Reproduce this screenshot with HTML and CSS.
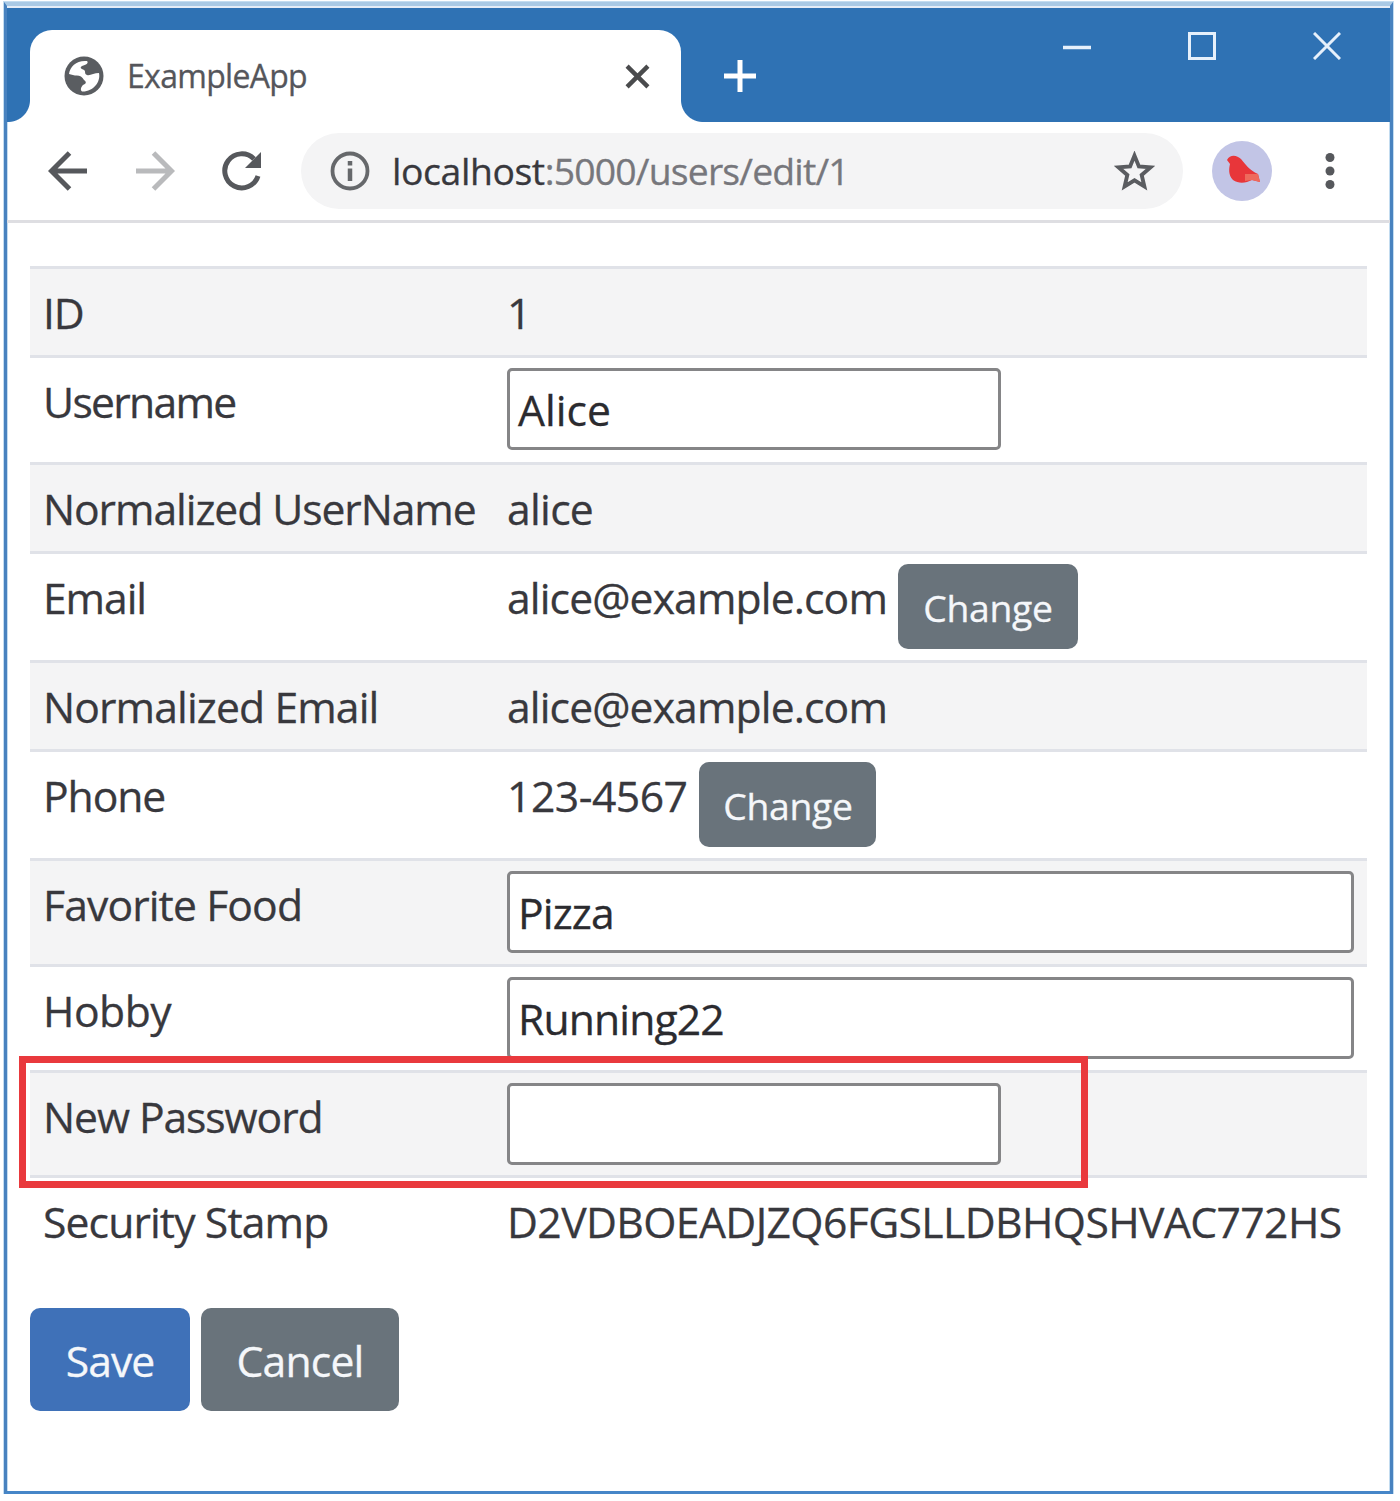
FILE: index.html
```html
<!DOCTYPE html>
<html lang="en">
<head>
<meta charset="utf-8">
<title>ExampleApp</title>
<link rel="stylesheet" href="styles.css">
</head>
<body>
<div class="window">
  <header class="titlebar">
    <div class="tab">
      <svg class="tab-icon" viewBox="0 0 40 40"><circle cx="20" cy="20" r="19.500" fill="#5a5d61"/><path d="M5 18C6 10 13 4 23 5C25 7 22 9 18 10C15 12 18 13 20 14C22 15 20 18 23 19C26 20 30 17 35 17C37 26 29 36 18 35.500C16 34 17 31 19 29C22 28 23 26 20 24C18 20 15 19 11 19.500Z" fill="#fff"/></svg>
      <span class="tab-title">ExampleApp</span>
      <svg class="tab-close" viewBox="0 0 24 24"><path d="M2 2L22 22M22 2L2 22" stroke="#4a4b4d" stroke-width="4.200"/></svg>
    </div>
    <svg class="new-tab" viewBox="0 0 34 34"><path d="M17 1V33M1 17H33" stroke="#fff" stroke-width="5"/></svg>
    <div class="controls">
      <svg viewBox="0 0 28 28"><path d="M0 15.500H28" stroke="#e6f0fb" stroke-width="3.500"/></svg>
      <svg viewBox="0 0 28 28"><rect x="1.500" y="1.500" width="25" height="25" fill="none" stroke="#e6f0fb" stroke-width="3"/></svg>
      <svg viewBox="0 0 28 28"><path d="M1 1L27 27M27 1L1 27" stroke="#e6f0fb" stroke-width="3"/></svg>
    </div>
  </header>
  <nav class="toolbar">
    <svg class="nav-icon" viewBox="0 0 40 40"><path d="M39 20H4M21.500 2L3.500 20L21.500 38" fill="none" stroke="#56585c" stroke-width="5"/></svg>
    <svg class="nav-icon" viewBox="0 0 40 40"><path d="M1 20H36M18.500 2L36.500 20L18.500 38" fill="none" stroke="#b9babc" stroke-width="5"/></svg>
    <svg class="nav-icon" viewBox="0 0 40 40"><path d="M36 25A17 17 0 1 1 32 8" fill="none" stroke="#56585c" stroke-width="5"/><path d="M39 1V17H23Z" fill="#56585c"/></svg>
    <div class="omnibox">
      <svg class="info" viewBox="0 0 40 40"><circle cx="20" cy="20" r="17.500" fill="none" stroke="#66686b" stroke-width="3.800"/><path d="M20 17.500V30M20 10V14.500" stroke="#66686b" stroke-width="4.500"/></svg>
      <span class="url"><span class="host">localhost</span><span class="path">:5000/users/edit/1</span></span>
      <svg class="star" viewBox="0 0 40 40"><path d="M20 4.500L24.300 15.100L35.500 16L27 23.400L29.600 34.500L20 28.600L10.400 34.500L13 23.400L4.500 16L15.700 15.100Z" fill="none" stroke="#5a5c60" stroke-width="3.800"/></svg>
    </div>
    <svg class="avatar" viewBox="0 0 60 60"><circle cx="30" cy="30" r="30" fill="#c2c5e6"/><path d="M15 19C18 13 25 14 29 18C34 24 37 29 46 33L48 41L40 39C34 42 27 43 21 39C16 34 17 27 18 23Z" fill="#e8363a"/><path d="M33 33L46 33L48 41L40 39L33 40Z" fill="#ee6a5c"/></svg>
    <svg class="menu" viewBox="0 0 10 40"><g fill="#56585c"><circle cx="5" cy="6.500" r="4.500"/><circle cx="5" cy="20" r="4.500"/><circle cx="5" cy="33.500" r="4.500"/></g></svg>
  </nav>
  <main class="content">
    <div class="table">
      <div class="row striped h89"><span class="label tight-4">ID</span><span class="value">1</span></div>
      <div class="row h107"><span class="label tight-5">Username</span><div class="input short">Alice</div></div>
      <div class="row striped h89"><span class="label tight-4">Normalized UserName</span><span class="value tight-2">alice</span></div>
      <div class="row h109"><span class="label tight-4">Email</span><span class="value tight-3">alice@example.com</span><div class="button change">Change</div></div>
      <div class="row striped h89"><span class="label tight-3">Normalized Email</span><span class="value tight-3">alice@example.com</span></div>
      <div class="row h109"><span class="label tight-4">Phone</span><span class="value tight-1">123-4567</span><div class="button change phone">Change</div></div>
      <div class="row striped h106"><span class="label tight-3">Favorite Food</span><div class="input tight-3">Pizza</div></div>
      <div class="row h106"><span class="label tight-1">Hobby</span><div class="input tight-3">Running22</div></div>
      <div class="row striped h105"><span class="label tight-4">New Password</span><div class="input short"></div></div>
      <div class="row last"><span class="label tight-3">Security Stamp</span><span class="value stamp">D2VDBOEADJZQ6FGSLLDBHQSHVAC772HS</span></div>
      <div class="highlight"></div>
    </div>
    <div class="actions">
      <div class="button save">Save</div>
      <div class="button cancel">Cancel</div>
    </div>
  </main>
</div>
</body>
</html>
```
FILE: styles.css
```css
* { box-sizing: border-box; }
body { margin: 0; background: #fff; font-family: "Open Sans", "Noto Sans", sans-serif; color: #38383d; overflow: hidden; -webkit-text-stroke: 0.3px; }
svg { display: block; flex: none; }

.window {
  width: 1389px; height: 1492px; margin: 2px 0 0 4px;
  border: 3px solid #4882bf; border-top: 4px solid #a9c9e5; border-bottom-color: #4686c8;
  box-shadow: 0 0 0 1px #c3dcf0, inset 1px 0 #c3dcf0, inset -1px 0 #c3dcf0;
}

/* Title bar */
.titlebar { display: flex; height: 116px; border-top: 2px solid #e4ecf7; background: #2f72b4; }
.tab {
  position: relative; display: flex; align-items: center;
  width: 651px; height: 92px; margin: 22px 0 0 23px; padding: 0 31px 0 34px;
  background: #fff; border-radius: 22px 22px 0 0;
}
.tab::before, .tab::after { content: ""; position: absolute; bottom: 0; width: 22px; height: 22px; }
.tab::before { left: -22px; background: radial-gradient(circle at 0 0, transparent 21.5px, #fff 22.5px); }
.tab::after { right: -22px; background: radial-gradient(circle at 100% 0, transparent 21.5px, #fff 22.5px); }
.tab-icon { width: 40px; height: 40px; }
.tab-title { margin-left: 23px; font-size: 32px; line-height: 44px; letter-spacing: -0.7px; color: #55565b; }
.tab-close { width: 25px; height: 25px; margin-left: auto; }
.new-tab { width: 34px; height: 34px; margin: 51px 0 0 42px; }
.controls { display: flex; gap: 97px; margin: 24px 49px 0 auto; }
.controls svg { width: 28px; height: 28px; }

/* Toolbar */
.toolbar { display: flex; align-items: center; height: 101px; padding: 0 0 0 41px; border-bottom: 3px solid #dedee2; }
.nav-icon { width: 40px; height: 40px; margin-right: 47px; }
.omnibox {
  display: flex; align-items: center; width: 882px; height: 76px; margin-left: -8px; padding: 0 28px 0 29px;
  border-radius: 38px; background: #f4f4f5;
}
.info { width: 40px; height: 40px; }
.url { margin-left: 22px; font-size: 37.33px; line-height: 50px; white-space: nowrap; }
.host { letter-spacing: -0.4px; color: #38383d; }
.path { letter-spacing: -0.82px; color: #77777c; }
.star { width: 41px; height: 41px; margin-left: auto; }
.avatar { width: 60px; height: 60px; margin-left: 29px; }
.menu { width: 10px; height: 40px; margin-left: 53px; }

/* Form table */
.content { padding: 43px 0 0 23px; }
.table { position: relative; width: 1337px; }
.row { display: flex; align-items: flex-start; border-top: 3px solid #e0e2e8; font-size: 42.67px; line-height: 64px; white-space: nowrap; }
.striped { background: #f4f4f5; }
.h89 { height: 89px; }
.h105 { height: 105px; }
.h106 { height: 106px; }
.h107 { height: 107px; }
.h109 { height: 109px; }
.last { height: 89px; }
.label { width: 477px; padding: 12px 0 0 13px; }
.value { padding-top: 12px; }
.tight-1 { letter-spacing: -0.5px; }
.tight-2 { letter-spacing: -0.7px; }
.tight-3 { letter-spacing: -0.88px; }
.tight-4 { letter-spacing: -1.08px; }
.tight-5 { letter-spacing: -1.7px; }
.stamp { letter-spacing: -0.6px; }
.input {
  width: 847px; height: 82px; margin: 10px 0 0; padding-left: 8px;
  border: 3px solid #858587; border-radius: 5px; background: #fff; color: #2b2b2f; line-height: 77px;
}
.short { width: 494px; }
.short { line-height: 78px; }
.button { border-radius: 10px; background: #69737b; color: #f5f7fa; text-align: center; }
.change { width: 180px; height: 85px; margin: 10px 0 0 11px; font-size: 37.33px; line-height: 88px; letter-spacing: -0.3px; }
.phone { width: 177px; margin-left: 12px; }
.highlight { position: absolute; left: -11px; top: 790px; width: 1069px; height: 132px; border: 7px solid #e9393d; }

/* Actions */
.actions { display: flex; gap: 11px; margin-top: 44px; font-size: 42.67px; line-height: 106px; }
.save { width: 160px; height: 103px; background: #3f71b8; letter-spacing: -1px; }
.cancel { width: 198px; height: 103px; letter-spacing: -0.8px; }
```
